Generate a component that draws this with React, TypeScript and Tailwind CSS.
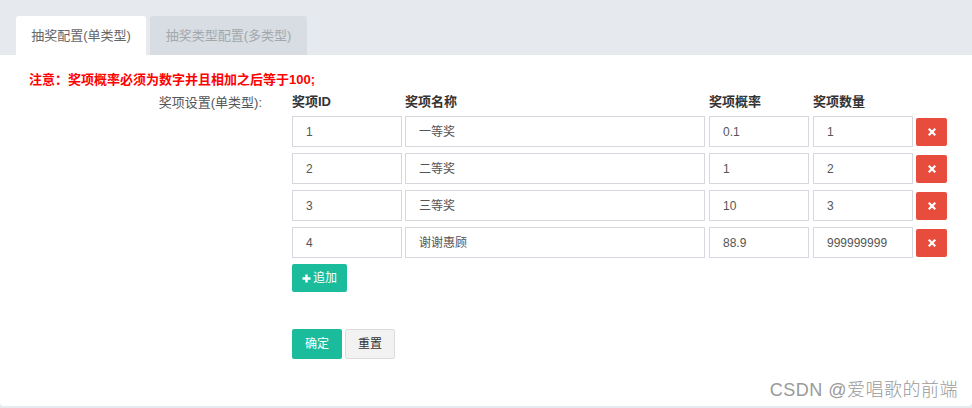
import React from "react";

const rows = [
  { id: "1", name: "一等奖", p: "0.1", q: "1" },
  { id: "2", name: "二等奖", p: "1", q: "2" },
  { id: "3", name: "三等奖", p: "10", q: "3" },
  { id: "4", name: "谢谢惠顾", p: "88.9", q: "999999999" },
];

const inputCls =
  "h-[31px] border border-[#d5d8de] bg-white pl-[13px] text-[12px] text-[#555] flex items-center";

export default function App() {
  return (
    <div
      className="w-[972px] h-[408px] bg-[#e6e9ed] flex flex-col overflow-hidden"
      style={{ fontFamily: '"Liberation Sans", "Noto Sans CJK SC", sans-serif' }}
    >
      <div className="h-[55px] flex items-end pl-[16px] gap-[4px] shrink-0">
        <div className="w-[130px] h-[39px] bg-white rounded-t-[3px] flex items-center justify-center text-[13px] text-[#666]">
          抽奖配置(单类型)
        </div>
        <div className="w-[157px] h-[39px] bg-[#d7dde3] rounded-t-[3px] flex items-center justify-center text-[13px] text-[#a3a8ad]">
          抽奖类型配置(多类型)
        </div>
      </div>
      <div className="relative h-[351px] bg-white rounded-b-[4px] shrink-0">
        <div className="pl-[29px] pt-[16px] text-[13px] font-bold text-[#ff0000] leading-[18px]">
          注意：奖项概率必须为数字并且相加之后等于100;
        </div>
        <div className="flex mt-[3px]">
          <div className="w-[262px] text-right text-[13px] text-[#555] leading-[20px] pt-[1px]">
            奖项设置(单类型):
          </div>
          <div className="ml-[30px] flex flex-col">
            <div className="flex text-[13px] font-bold text-[#333] leading-[20px] h-[20px]">
              <div className="w-[113px]">奖项ID</div>
              <div className="w-[304px]">奖项名称</div>
              <div className="w-[104px]">奖项概率</div>
              <div className="w-[103px]">奖项数量</div>
            </div>
            <div className="flex flex-col gap-[6px] mt-[4px]">
              {rows.map((r) => (
                <div key={r.id} className="flex items-center">
                  <div className={`${inputCls} w-[110px]`}>{r.id}</div>
                  <div className={`${inputCls} w-[300px] ml-[3px]`}>{r.name}</div>
                  <div className={`${inputCls} w-[100px] ml-[4px]`}>{r.p}</div>
                  <div className={`${inputCls} w-[100px] ml-[4px]`}>{r.q}</div>
                  <div className="ml-[3px] w-[31px] h-[28px] rounded-[2px] bg-[#e74c3c] flex items-center justify-center">
                    <svg width="8" height="8" viewBox="0 0 8 8">
                      <path d="M1.5 1.5 L6.5 6.5 M6.5 1.5 L1.5 6.5" stroke="white" strokeWidth="2.2" strokeLinecap="square" />
                    </svg>
                  </div>
                </div>
              ))}
            </div>
            <div className="mt-[6px] w-[55px] h-[28px] rounded-[2px] bg-[#1abc9c] text-white text-[12px] flex items-center justify-center gap-[2px]">
              <svg width="9" height="9" viewBox="0 0 9 9">
                <path d="M4.5 0.5 V8.5 M0.5 4.5 H8.5" stroke="white" strokeWidth="2.4" />
              </svg>
              <span>追加</span>
            </div>
            <div className="mt-[37px] flex gap-[3px]">
              <div className="w-[50px] h-[30px] rounded-[2px] bg-[#1abc9c] text-white text-[12px] flex items-center justify-center">
                确定
              </div>
              <div className="w-[50px] h-[30px] rounded-[2px] bg-[#f2f2f2] border border-[#dcdcdc] text-[#333] text-[12px] flex items-center justify-center">
                重置
              </div>
            </div>
          </div>
        </div>
        <div className="absolute right-[14px] bottom-[2px] text-[18px] font-light text-[#9a9a9a] tracking-[0.5px]">
          CSDN @爱唱歌的前端
        </div>
      </div>
    </div>
  );
}
